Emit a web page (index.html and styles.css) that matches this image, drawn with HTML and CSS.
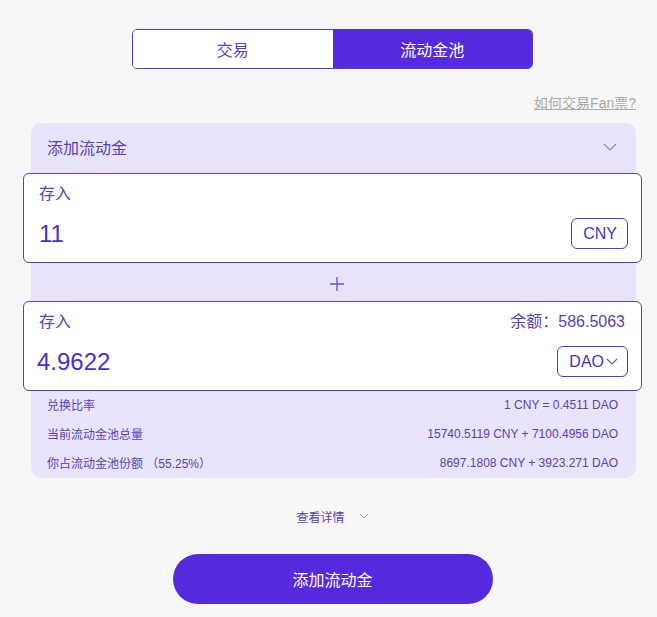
FILE: index.html
```html
<!DOCTYPE html>
<html lang="zh">
<head>
<meta charset="utf-8">
<title>流动金池</title>
<link rel="stylesheet" href="styles.css">
</head>
<body>
<main class="page">
  <div class="tabs">
    <button class="tab">交易</button>
    <button class="tab tab-active">流动金池</button>
  </div>
  <div class="help-row"><a class="help-link" href="#">如何交易Fan票?</a></div>

  <section class="panel">
    <div class="panel-head">
      <span>添加流动金</span>
      <svg class="chev" width="14" height="8" viewBox="0 0 14 8"><path d="M1 1 L7 7 L13 1" fill="none" stroke="#8e7fd6" stroke-width="1.2"/></svg>
    </div>

    <div class="card">
      <div class="card-top"><span class="label">存入</span></div>
      <div class="card-row">
        <span class="amount">11</span>
        <span class="token">CNY</span>
      </div>
    </div>

    <div class="plus">
      <svg width="14" height="14" viewBox="0 0 14 14"><path d="M7 0 V14 M0 7 H14" stroke="#6a4fc8" stroke-width="1.3"/></svg>
    </div>

    <div class="card">
      <div class="card-top"><span class="label">存入</span><span class="label">余额：586.5063</span></div>
      <div class="card-row">
        <span class="amount amount-wide">4.9622</span>
        <span class="token">DAO<svg class="tok-chev" width="12" height="7" viewBox="0 0 12 7"><path d="M1 1 L6 6 L11 1" fill="none" stroke="#6a4fc8" stroke-width="1.1"/></svg></span>
      </div>
    </div>

    <div class="rows">
      <div class="row"><span>兑换比率</span><span>1 CNY = 0.4511 DAO</span></div>
      <div class="row"><span>当前流动金池总量</span><span>15740.5119 CNY + 7100.4956 DAO</span></div>
      <div class="row"><span>你占流动金池份额 （55.25%）</span><span>8697.1808 CNY + 3923.271 DAO</span></div>
    </div>
  </section>

  <div class="details">
    <span>查看详情</span>
    <svg width="10" height="6" viewBox="0 0 10 6"><path d="M1 1 L5 5 L9 1" fill="none" stroke="#9a8fd0" stroke-width="1"/></svg>
  </div>

  <div class="submit-row"><button class="submit">添加流动金</button></div>
</main>
</body>
</html>
```

FILE: styles.css
```css
* { box-sizing: border-box; }
html, body {
  margin: 0;
  padding: 0;
  background: #f7f7f7;
  font-family: "Liberation Sans", "Noto Sans CJK SC", sans-serif;
  color: #5b40b5;
}
.page {
  width: 619px;
  margin-left: 23px;
  padding-top: 29px;
}
.tabs {
  display: flex;
  width: 401px;
  height: 40px;
  margin: 0 auto;
  border: 1px solid #5a3cc4;
  border-radius: 5px;
  overflow: hidden;
  background: #fff;
}
.tab {
  flex: 1;
  border: 0;
  background: #fff;
  color: #5b40b5;
  font-family: inherit;
  font-size: 16px;
  padding: 0;
}
.tab-active {
  background: #5529e0;
  color: #fff;
}
.help-row {
  display: flex;
  justify-content: flex-end;
  margin-top: 24px;
  padding-right: 6px;
  height: 20px;
  line-height: 20px;
}
.help-link {
  font-size: 14px;
  color: #a9a9a9;
  text-decoration: underline;
}
.panel {
  margin: 10px 6px 0 8px;
  background: #e9e4fc;
  border-radius: 10px;
  padding-bottom: 1px;
}
.panel-head {
  height: 50px;
  display: flex;
  align-items: center;
  justify-content: space-between;
  padding: 0 19px 3px 16px;
  font-size: 16px;
  color: #5b40b5;
}
.chev { display: block; }
.card {
  margin: 0 -6px 0 -8px;
  background: #fff;
  border: 1px solid #5a3cc4;
  border-radius: 6px;
  padding: 10px 13px 13px 15px;
}
.card-top {
  display: flex;
  justify-content: space-between;
  height: 20px;
  line-height: 20px;
  font-size: 16px;
  padding-right: 3px;
}
.card-row {
  display: flex;
  justify-content: space-between;
  align-items: center;
  margin-top: 14px;
  height: 31px;
}
.amount {
  font-size: 24px;
  color: #4b2fc6;
}
.amount-wide { margin-left: -2px; }
.token {
  display: flex;
  align-items: center;
  height: 31px;
  padding: 0 10px 0 11px;
  border: 1px solid #5a3cc4;
  border-radius: 6px;
  font-size: 16px;
  color: #4b2fc6;
}
.tok-chev { margin-left: 2px; margin-right: -1px; }
.plus {
  height: 38px;
  display: flex;
  align-items: center;
  justify-content: center;
  padding: 4px 0 0 6px;
}
.rows { padding: 0 18px 0 16px; margin-top: -1px; }
.row {
  display: flex;
  justify-content: space-between;
  align-items: center;
  height: 29px;
  font-size: 12px;
  color: #5b40b5;
}
.details {
  display: flex;
  justify-content: center;
  align-items: center;
  gap: 14px;
  height: 40px;
  margin-top: 18px;
  font-size: 12px;
  color: #5b40b5;
}
.submit-row {
  display: flex;
  justify-content: center;
  margin-top: 18px;
}
.submit {
  width: 320px;
  height: 50px;
  border: 0;
  border-radius: 25px;
  background: #5529e0;
  color: #fff;
  font-family: inherit;
  font-size: 16px;
}
```
